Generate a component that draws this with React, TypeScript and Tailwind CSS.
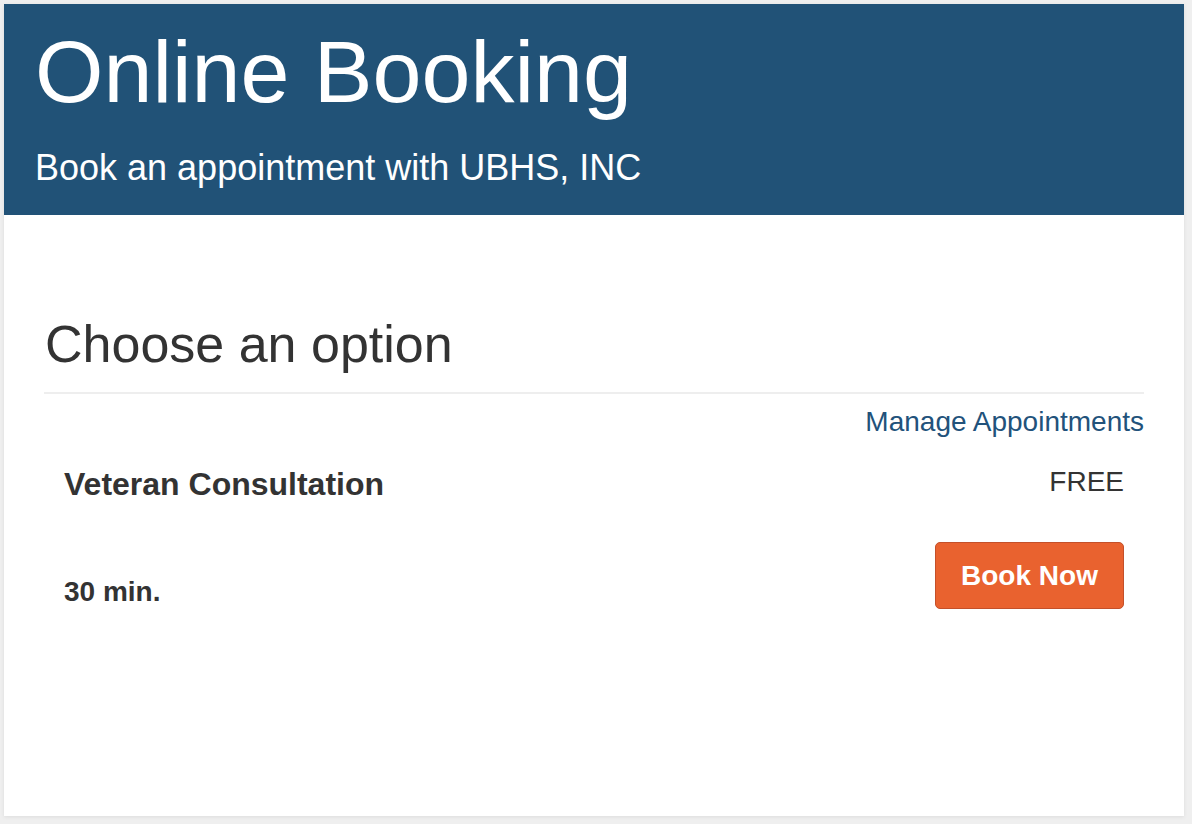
import React from 'react';

interface BookingOption {
  name: string;
  price: string;
  duration: string;
}

const options: BookingOption[] = [
  { name: 'Veteran Consultation', price: 'FREE', duration: '30 min.' },
];

const App: React.FC = () => {
  return (
    <div className="min-h-[824px] w-full bg-[#efefef] pt-[4px] pl-[4px] font-['Liberation_Sans',Arial,sans-serif] text-[#333333]">
      <div className="w-[1180px] h-[812px] bg-white shadow-[0_1px_4px_rgba(0,0,0,0.08)]">
        <div className="bg-[#215277] h-[211px] pt-[24px] px-[31px] text-white">
          <h1 className="text-[88px] leading-[88px]">Online Booking</h1>
          <p className="mt-[34px] text-[36px] leading-[36px]">Book an appointment with UBHS, INC</p>
        </div>

        <div className="px-[40px] pt-[103px]">
          <h2 className="text-[52px] leading-[52px] pl-[1px]">Choose an option</h2>
          <div className="mt-[22px] h-[2px] bg-[#eeeeee]" />
          <div className="mt-[14px] flex justify-end">
            <a href="#" className="text-[28px] leading-[28px] text-[#22527b]">
              Manage Appointments
            </a>
          </div>

          {options.map((option) => (
            <div key={option.name} className="mt-[30px] px-[20px]">
              <div className="flex justify-between items-start">
                <div className="mt-[2px] text-[32px] leading-[32px] font-bold">{option.name}</div>
                <div className="mt-[2px] text-[28px] leading-[28px]">{option.price}</div>
              </div>
              <div className="mt-[42px] flex justify-between items-start">
                <div className="mt-[36px] text-[28px] leading-[28px] font-bold">{option.duration}</div>
                <button className="w-[189px] h-[67px] flex items-center justify-center rounded-[5px] border border-[#c4502a] bg-[#e9622f] text-white text-[28px] leading-[28px] font-bold">
                  Book Now
                </button>
              </div>
            </div>
          ))}
        </div>
      </div>
    </div>
  );
};

export default App;
